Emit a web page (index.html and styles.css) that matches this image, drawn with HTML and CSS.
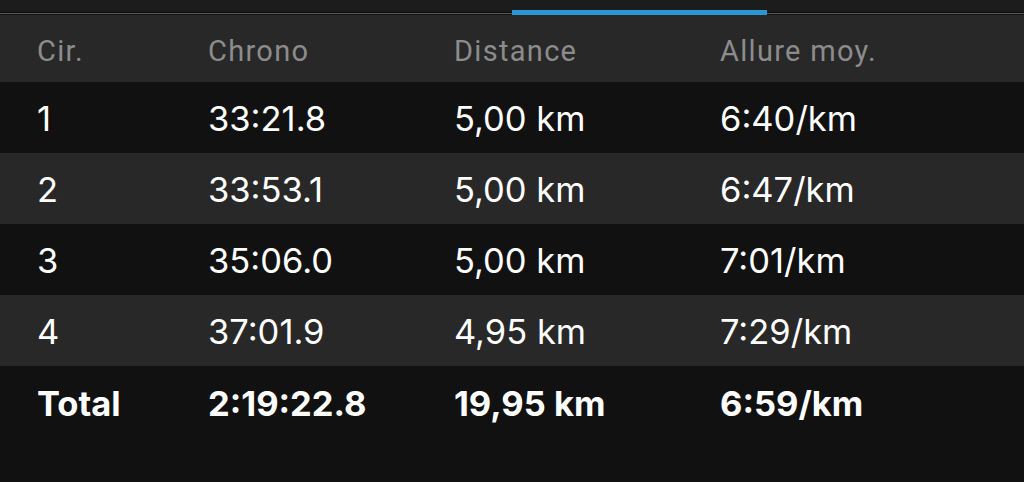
FILE: index.html
```html
<!DOCTYPE html>
<html lang="fr">
<head>
    <meta charset="UTF-8">
    <meta name="viewport" content="width=device-width, initial-scale=1.0">
    <title>Circuits</title>
    <link rel="stylesheet" href="styles.css">
</head>
<body>
    <div class="tabs">
        <div class="tab-indicator"></div>
    </div>
    <div class="laps">
        <div class="row head">
            <span>Cir.</span>
            <span>Chrono</span>
            <span>Distance</span>
            <span>Allure moy.</span>
        </div>
        <div class="row">
            <span>1</span>
            <span>33:21.8</span>
            <span>5,00 km</span>
            <span>6:40/km</span>
        </div>
        <div class="row alt">
            <span>2</span>
            <span>33:53.1</span>
            <span>5,00 km</span>
            <span>6:47/km</span>
        </div>
        <div class="row">
            <span>3</span>
            <span>35:06.0</span>
            <span>5,00 km</span>
            <span>7:01/km</span>
        </div>
        <div class="row alt">
            <span>4</span>
            <span>37:01.9</span>
            <span>4,95 km</span>
            <span>7:29/km</span>
        </div>
        <div class="row total">
            <span>Total</span>
            <span>2:19:22.8</span>
            <span>19,95 km</span>
            <span>6:59/km</span>
        </div>
    </div>
</body>
</html>
```

FILE: styles.css
```css
body {
    margin: 0;
    background: #111111;
    font-family: Inter, "Noto Sans", sans-serif;
    color: #ffffff;
    height: 482px;
    overflow: hidden;
}
.tabs {
    height: 12px;
    background: #1c1c1c;
    border-bottom: 1px solid #0a0a0a;
    box-shadow: 0 1px 0 #5a5a5a;
    margin-bottom: 2px;
    display: flex;
}
.tab-indicator {
    margin-left: 512px;
    margin-top: 10px;
    width: 255px;
    height: 5px;
    background: #2a97d4;
    position: relative;
    z-index: 1;
}
.row {
    display: grid;
    grid-template-columns: 171px 246px 266px 1fr;
    padding-left: 37px;
    height: 71px;
    align-items: center;
    font-size: 34.5px;
}
.row span {
    padding-top: 2px;
}
.row.head {
    height: 67px;
    background: #282828;
    color: #8c8c8c;
    font-family: Roboto, sans-serif;
    font-size: 29px;
    letter-spacing: 1.3px;
}
.row.head span {
    padding-top: 4px;
}
.row.alt {
    background: #282828;
}
.row.total {
    font-weight: 700;
    height: 72px;
}
```
